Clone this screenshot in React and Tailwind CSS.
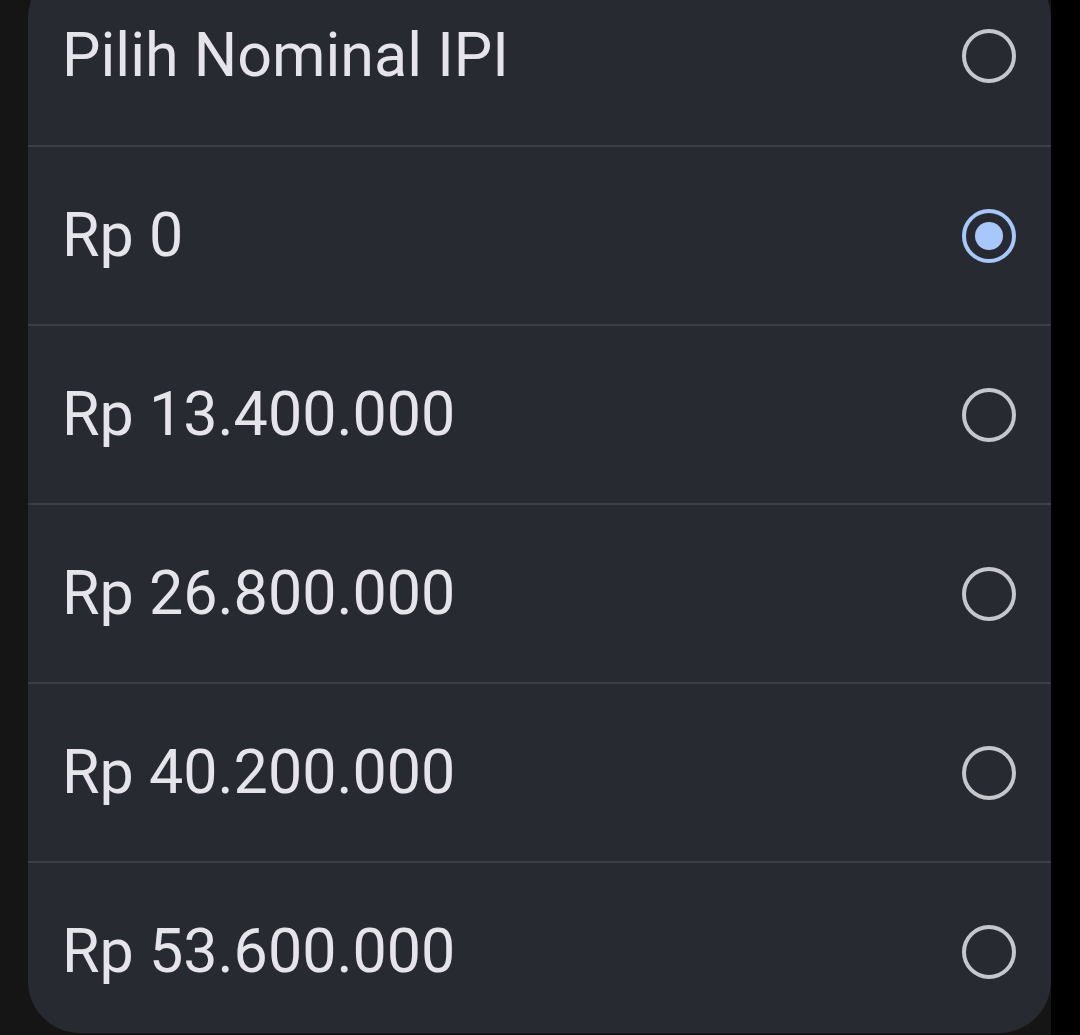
import React, { useState } from "react";

const OPTIONS = [
  "Pilih Nominal IPI",
  "Rp 0",
  "Rp 13.400.000",
  "Rp 26.800.000",
  "Rp 40.200.000",
  "Rp 53.600.000",
];

function Radio({ checked }) {
  return (
    <span
      className={`w-[54px] h-[54px] rounded-full border-[4px] flex items-center justify-center shrink-0 ${
        checked ? "border-[#a8c7fa]" : "border-[#c6c7cd]"
      }`}
    >
      {checked && <span className="w-[28px] h-[28px] rounded-full bg-[#a8c7fa]" />}
    </span>
  );
}

export default function App() {
  const [selected, setSelected] = useState(1);

  return (
    <div className="h-[1035px] w-[1080px] overflow-hidden flex bg-[linear-gradient(to_right,#151515_0px,#151515_1051px,#000_1051px)]" style={{ fontFamily: "Roboto, 'Noto Sans', sans-serif" }}>
      <div className="ml-[28px] w-[1023px] h-[1067px] -mt-[34px] bg-[#272a31] rounded-[52px] overflow-hidden flex flex-col">
        {OPTIONS.map((label, i) => (
          <button
            key={label}
            onClick={() => setSelected(i)}
            className={`h-[179px] shrink-0 flex items-center justify-between pl-[34px] pr-[35px] text-left ${
              i > 0 ? "border-t-2 border-[#3b3e45]" : ""
            }`}
          >
            <span className="text-[#e4e4ea] text-[61px] leading-none">{label}</span>
            <Radio checked={selected === i} />
          </button>
        ))}
      </div>
    </div>
  );
}
